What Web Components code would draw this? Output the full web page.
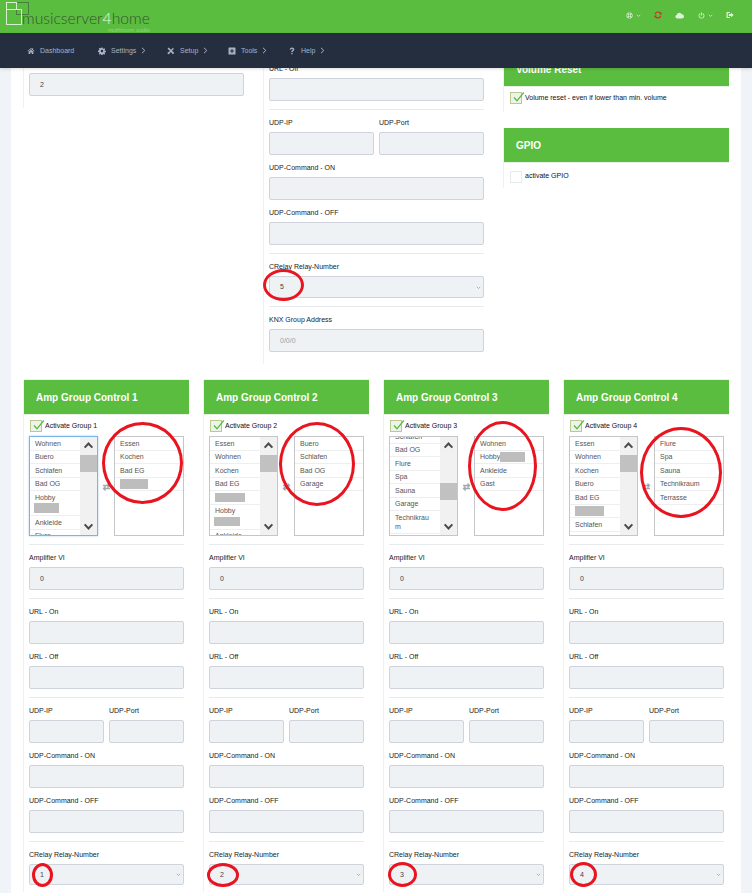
<!DOCTYPE html>
<html>
<head>
<meta charset="utf-8">
<title>musicserver4home</title>
<style>
  html, body { margin: 0; padding: 0; }
  body {
    position: relative;
    width: 752px;
    height: 893px;
    overflow: hidden;
    background: #f0f3f7;
    color: #222;
    font: 7px/10px "Liberation Sans", Arial, sans-serif;
  }
</style>
</head>
<body>
<top-bar></top-bar>
<nav-bar>
  <nav-item icon="home" label="Dashboard"></nav-item>
  <nav-item icon="gear" label="Settings" more></nav-item>
  <nav-item icon="tools" label="Setup" more></nav-item>
  <nav-item icon="plus" label="Tools" more></nav-item>
  <nav-item icon="help" label="Help" more></nav-item>
</nav-bar>
<page-main>
  <top-row>
    <side-column style="padding-top:5px;height:35px">
      <form-field value="2"></form-field>
    </side-column>
    <side-column style="margin-top:-5px;height:301px">
      <form-field label="URL - Off" line></form-field>
      <field-pair first="UDP-IP" second="UDP-Port"></field-pair>
      <form-field label="UDP-Command - ON"></form-field>
      <form-field label="UDP-Command - OFF" line></form-field>
      <form-field label="CRelay Relay-Number" select value="5" line></form-field>
      <form-field label="KNX Group Address" placeholder="0/0/0"></form-field>
    </side-column>
    <right-column>
      <panel-card title="Volume Reset" style="margin-top:-16px;height:60px">
        <check-row label="Volume reset - even if lower than min. volume" checked></check-row>
      </panel-card>
      <panel-card title="GPIO" style="margin-top:16px;height:60px">
        <check-row label="activate GPIO" style="padding-top:8px;--text-shift:-2px"></check-row>
      </panel-card>
    </right-column>
  </top-row>
  <amp-row>
    <amp-group number="1" relay="1" focused
      left="Wohnen|Buero|Schlafen|Bad OG|Hobby+#25|Ankleide|Flure" right="Essen|Kochen|Bad EG|#28"
      thumb="1:28"></amp-group>
    <amp-group number="2" relay="2"
      left="Essen|Wohnen|Kochen|Bad EG|#30|Hobby+#26|Ankleide" right="Buero|Schlafen|Bad OG|Garage"
      thumb="1:28"></amp-group>
    <amp-group number="3" relay="3" offset="7"
      left="Schlafen|Bad OG|Flure|Spa|Sauna|Garage|Technikraum" right="Wohnen|Hobby~#25|Ankleide|Gast"
      thumb="29:30"></amp-group>
    <amp-group number="4" relay="4"
      left="Essen|Wohnen|Kochen|Buero|Bad EG|#29|Schlafen" right="Flure|Spa|Sauna|Technikraum|Terrasse"
      thumb="1:33"></amp-group>
  </amp-row>
</page-main>

<red-ring x="263" y="269" w="41" h="32"></red-ring>
<red-ring x="102" y="422" w="81" h="82"></red-ring>
<red-ring x="279" y="422" w="76" h="84"></red-ring>
<red-ring x="468" y="421" w="69" h="90"></red-ring>
<red-ring x="640" y="427" w="82" h="91"></red-ring>
<red-ring x="32" y="863" w="21" h="24"></red-ring>
<red-ring x="207" y="863" w="32" h="24"></red-ring>
<red-ring x="388" y="862" w="29" h="25"></red-ring>
<red-ring x="570" y="862" w="27" h="25"></red-ring>

<script>
const icons = {
  home: `<path d="M1 8 8 2l2.400 2V2.600h1.800v3.100L15 8l-.9 1L8 4 1.900 9zM3.200 9.500 8 5.400l4.800 4.100V14H9.500v-3h-3v3H3.200z"/>`,
  gear: `<path fill-rule="evenodd" d="M6.800 1h2.400l.4 2 1.400.6 1.700-1.100 1.700 1.700-1.100 1.700.6 1.400 2 .4v2.400l-2 .4-.6 1.400 1.100 1.700-1.700 1.700-1.700-1.100-1.400.6-.4 2H6.800l-.4-2-1.400-.6-1.700 1.100-1.700-1.700 1.100-1.700-.6-1.400-2-.4V6.800l2-.4.6-1.400-1.100-1.700 1.700-1.700 1.700 1.100 1.400-.6zM8 5.600a2.400 2.400 0 1 0 0 4.800 2.400 2.400 0 0 0 0-4.800z"/>`,
  tools: `<path d="M1 3.500 3.500 1l4.500 4.500L12 1.500l.5 1.500 1.500.5-4 4 4.500 4.500-2.500 2.500L7.500 10 3.800 14.500 1.500 14l-.5-2.300L6 8z"/>`,
  plus: `<path fill-rule="evenodd" d="M2 1h12a1 1 0 0 1 1 1v12a1 1 0 0 1-1 1H2a1 1 0 0 1-1-1V2a1 1 0 0 1 1-1zm5 3v3H4v2h3v3h2V9h3V7H9V4z"/>`,
  help: `<path d="M3.500 5C3.800 2.500 5.600 1 8 1c2.600 0 4.500 1.500 4.500 3.800 0 3-3.300 3-3.300 5.200H6.600c0-3.300 3-3.400 3-5.100 0-.9-.7-1.400-1.600-1.400-1 0-1.700.6-1.900 1.800zM6.600 11.500h2.600V14.500H6.600z"/>`,
  globe: `<path fill-rule="evenodd" d="M8 1a7 7 0 1 0 0 14A7 7 0 0 0 8 1zM6.500 2.500h3L10 5H6zM5 2.800 4.600 5H2.800A5.800 5.800 0 0 1 5 2.800zM2.300 6.300h2.200v3.400H2.300zM6 6.300h4v3.400H6zM11.500 6.300h2.200v3.400h-2.200zM2.800 11h1.800L5 13.200A5.800 5.800 0 0 1 2.800 11zM6 11h4l-.5 2.500h-3zM11.400 11h1.800A5.800 5.800 0 0 1 11 13.200zM11 2.800A5.800 5.800 0 0 1 13.200 5h-1.800z"/>`,
  sync: `<path d="M8 1a7 7 0 0 1 5.500 2.700L15 2.200V7h-4.800l1.700-1.700A4.600 4.600 0 0 0 3.600 6.500H1.200A7 7 0 0 1 8 1zM1 9h4.800l-1.700 1.700a4.600 4.600 0 0 0 8.300-1.200h2.400A7 7 0 0 1 2.500 12.300L1 13.800z"/>`,
  cloud: `<path d="M4 13.500a3.500 3.500 0 0 1-.6-6.900A4.600 4.600 0 0 1 8 3a4.400 4.400 0 0 1 4.100 2.900 3.800 3.800 0 0 1 .2 7.600z"/>`,
  power: `<path d="M7 1h2v7H7zM4.600 2.600l1 1.700a4.600 4.600 0 1 0 4.800 0l1-1.700a6.600 6.600 0 1 1-6.800 0z"/>`,
  exit: `<path d="M2 2h6v2H3.500v8H8v2H2a1 1 0 0 1-1-1V3a1 1 0 0 1 1-1zM10 3.500 15.500 8 10 12.500V10H5.500V6H10z"/>`,
};

function icon(name, size, colour) {
  return `<svg width="${size}" height="${size}" viewBox="0 0 16 16" fill="${colour}">${icons[name]}</svg>`;
}

function chevron(size, colour, width) {
  return `<svg width="${size}" height="${size}" viewBox="0 0 10 10" fill="none" stroke="${colour}" stroke-width="${width}"><path d="M1.500 3.500 5 7l3.500-3.500"/></svg>`;
}

class BaseElement extends HTMLElement {
  constructor() {
    super();
    this.attachShadow({ mode: "open" });
  }
  render(styles, template) {
    this.shadowRoot.innerHTML = `<style>${styles}</style>${template}`;
  }
}

class TopBar extends BaseElement {
  connectedCallback() {
    this.render(`
      :host { display: flex; align-items: center; height: 33px; background: #5bbd40; position: relative; }
      #logo { display: flex; width: 152px; margin-left: 6px; }
      #logo svg { flex: none; margin-right: -7px; margin-top: 1px; }
      #mark { display: flex; flex-direction: column; margin-top: 8px; }
      #name { font: 300 15.700px/19px Lato, "Liberation Sans", sans-serif; color: #34552f; white-space: nowrap; }
      #name b { font-weight: 300; color: #eef8ea; }
      #sub { font: 300 6px/6px Lato, "Liberation Sans", sans-serif; color: #b8e3ac; text-align: right; margin-top: -1px; white-space: nowrap; }
      #actions { display: flex; align-items: center; margin-left: auto; margin-right: 18px; margin-top: -3px; }
      #actions span { display: flex; align-items: center; gap: 3px; }
    `, `
      <div id="logo">
        <svg width="23" height="24" viewBox="0 0 23 24" fill="none">
          <rect x="10.500" y="0.500" width="12" height="12" stroke="#3f6b3a" stroke-opacity=".75"/>
          <rect x="0.500" y="0.500" width="10" height="7" stroke="#d5eecd"/>
          <rect x="0.500" y="7.500" width="15" height="15" stroke="#d5eecd"/>
        </svg>
        <div id="mark">
          <div id="name">musicserver<b>4</b>home</div>
          <div id="sub">multiroom audio</div>
        </div>
      </div>
      <div id="actions">
        <span style="margin-right:13px">${icon("globe", 7, "#dff2d9")}${chevron(5, "#dff2d9", 1.400)}</span>
        <span style="margin-right:13px">${icon("sync", 8, "#d8261f")}</span>
        <span style="margin-right:14px">${icon("cloud", 9, "#dff2d9")}</span>
        <span style="margin-right:13px">${icon("power", 7, "#dff2d9")}${chevron(5, "#dff2d9", 1.400)}</span>
        <span>${icon("exit", 8, "#dff2d9")}</span>
      </div>
    `);
  }
}

class NavBar extends BaseElement {
  connectedCallback() {
    this.render(`
      :host { display: flex; align-items: center; height: 35px; padding-left: 27px; box-sizing: border-box; background: #252e3f; position: relative; z-index: 2; box-shadow: 0 1px 3px rgba(0,0,0,.15); }
    `, `<slot></slot>`);
  }
}

const navWidths = { Dashboard: 71, Settings: 69, Setup: 61, Tools: 60, Help: 40 };

class NavItem extends BaseElement {
  connectedCallback() {
    const label = this.getAttribute("label");
    this.render(`
      :host { display: flex; align-items: center; width: ${navWidths[label]}px; color: #a7b2c4; font-size: 7px; }
      svg { flex: none; }
      #glyph { width: 13px; display: flex; }
      #more { margin-left: 5px; display: flex; }
    `, `
      <span id="glyph">${icon(this.getAttribute("icon"), 8, "#a7b2c4")}</span>
      <span>${label}</span>
      ${this.hasAttribute("more") ? `<span id="more"><svg width="5" height="7" viewBox="0 0 5 7" fill="none" stroke="#a7b2c4"><path d="M1 .8 3.800 3.500 1 6.200"/></svg></span>` : ""}
    `);
  }
}

class PageMain extends BaseElement {
  connectedCallback() {
    this.render(`
      :host { display: block; height: 825px; margin: 0 11px; padding: 0 12px 0 13px; background: #fff; overflow: hidden; }
    `, `<slot></slot>`);
  }
}

class TopRow extends BaseElement {
  connectedCallback() {
    this.render(`
      :host { display: grid; grid-template-columns: repeat(3, 225px); column-gap: 15px; height: 296px; margin-bottom: 16px; align-items: start; }
    `, `<slot></slot>`);
  }
}

class AmpRow extends BaseElement {
  connectedCallback() {
    this.render(`
      :host { display: grid; grid-template-columns: repeat(4, 165px); column-gap: 15px; }
    `, `<slot></slot>`);
  }
}

class SideColumn extends BaseElement {
  connectedCallback() {
    this.render(`
      :host { display: block; box-sizing: content-box; padding: 0 5px; box-shadow: -1px 0 0 #eef1f4; }
    `, `<slot></slot>`);
  }
}

class RightColumn extends BaseElement {
  connectedCallback() {
    this.render(`:host { display: block; }`, `<slot></slot>`);
  }
}

class PanelCard extends BaseElement {
  connectedCallback() {
    this.render(`
      :host { display: block; box-shadow: -1px 0 0 #eef1f4; }
      #title { height: 35px; padding: 1px 0 0 12px; display: flex; align-items: center; background: #5bbd40; border-bottom: 1px solid #e8f0e5; box-sizing: border-box; color: #fff; font: bold 10px "Liberation Sans", Arial, sans-serif; }
    `, `<div id="title">${this.getAttribute("title")}</div><slot></slot>`);
  }
}

class CheckRow extends BaseElement {
  connectedCallback() {
    const tick = this.hasAttribute("checked")
      ? `<svg width="14" height="14" viewBox="0 0 14 14" fill="none" style="position:absolute;left:0;top:-2px"><path d="M3 6.500 6 9.800 12.800 1.500" stroke="#5bbd40" stroke-width="1.300"/></svg>`
      : "";
    const border = this.hasAttribute("checked") ? "#b9c98f" : "#e6e9ed";
    const fill = this.hasAttribute("checked") ? "#eef3ea" : "#fff";
    this.render(`
      :host { display: flex; align-items: center; padding: 5px 0 0 6px; color: #111; }
      #box { position: relative; width: 12px; height: 12px; box-sizing: border-box; margin-right: 3px; border: 1px solid ${border}; background: ${fill}; flex: none; }
      #text { margin-top: var(--text-shift, 0); white-space: nowrap; }
    `, `<span id="box">${tick}</span><span id="text">${this.getAttribute("label")}</span>`);
  }
}

class FormField extends BaseElement {
  connectedCallback() {
    const label = this.getAttribute("label");
    const isSelect = this.hasAttribute("select");
    const placeholder = this.getAttribute("placeholder");
    const value = placeholder || this.getAttribute("value") || "";
    this.render(`
      :host { display: block; margin-bottom: 7px; }
      #label { height: 10px; line-height: 12px; margin-bottom: 5px; color: #222; white-space: nowrap; }
      #input { display: flex; align-items: center; justify-content: space-between; box-sizing: border-box; height: ${isSelect ? (this.getAttribute("height") || 22) : 23}px; padding: 0 2px 0 10px; background: #eff2f5; border: 1px solid #cfd4dc; border-radius: 2px; color: ${placeholder ? "#9a9ea6" : "#444"}; }
      hr { border: 0; height: 1px; margin: 8px 0 0; background: #e8ebee; }
    `, `
      ${label ? `<div id="label">${label}</div>` : ""}
      <div id="input"><span>${value}</span>${isSelect ? chevron(5, "#8a919c", 1.300) : ""}</div>
      ${this.hasAttribute("line") ? "<hr>" : ""}
    `);
  }
}

class FieldPair extends BaseElement {
  connectedCallback() {
    this.render(`
      :host { display: grid; grid-template-columns: 1fr 1fr; column-gap: 5px; }
    `, `
      <form-field label="${this.getAttribute("first")}"></form-field>
      <form-field label="${this.getAttribute("second")}"></form-field>
    `);
  }
}

class GroupList extends BaseElement {
  row(item) {
    const block = (w, extra = "") => `<i style="width:${w}px;${extra}"></i>`;
    if (item.startsWith("#")) return `<li>${block(item.slice(1))}</li>`;
    if (item.includes("+")) {
      const [text, w] = item.split("+#");
      return `<li>${text}<br>${block(w, "margin:1px 0 1px -1px")}</li>`;
    }
    if (item.includes("~")) {
      const [text, w] = item.split("~#");
      return `<li>${text}${block(w, "vertical-align:top")}</li>`;
    }
    return `<li>${item}</li>`;
  }
  connectedCallback() {
    const items = this.getAttribute("items").split("|");
    const thumb = this.getAttribute("thumb");
    const offset = this.getAttribute("offset") || 0;
    const [thumbTop, thumbHeight] = thumb ? thumb.split(":") : [0, 0];
    const up = `<svg width="11" height="11" viewBox="0 0 10 10" fill="none" stroke="#4a4a4a" stroke-width="1.800" style="transform:rotate(180deg)"><path d="M1.500 3 5 6.800 8.500 3"/></svg>`;
    const down = `<svg width="11" height="11" viewBox="0 0 10 10" fill="none" stroke="#4a4a4a" stroke-width="1.800"><path d="M1.500 3 5 6.800 8.500 3"/></svg>`;
    this.render(`
      :host { display: flex; height: 100px; box-sizing: border-box; background: #fff; border: 1px solid ${this.hasAttribute("focused") ? "#7db4e6" : "#c4c6c9"}; box-shadow: ${this.hasAttribute("focused") ? "0 0 2px #a8cdf0" : "none"}; overflow: hidden; color: #555; }
      ul { flex: 1; min-width: 0; margin: -${offset}px 0 0; padding: 0; list-style: none; }
      li { padding: 1.500px 8px 1.500px 5px; line-height: 9.500px; border-bottom: 1px solid #eceef0; word-break: break-all; }
      i { display: inline-block; height: 9.500px; background: #bdbdbd; vertical-align: top; }
      #bar { flex: none; width: 17px; display: flex; flex-direction: column; background: #f1f1f1; }
      #bar div { height: 17px; flex: none; display: flex; align-items: center; justify-content: center; }
      #track { flex: 1 !important; height: auto !important; display: block !important; }
      #thumb { width: 17px; background: #c1c1c1; height: ${thumbHeight}px; margin-top: ${thumbTop}px; }
    `, `
      <ul>${items.map((item) => this.row(item)).join("")}</ul>
      ${thumb ? `<div id="bar"><div>${up}</div><div id="track"><div id="thumb"></div></div><div>${down}</div></div>` : ""}
    `);
  }
}

class AmpGroup extends BaseElement {
  connectedCallback() {
    const n = this.getAttribute("number");
    const thumb = this.getAttribute("thumb");
    const offset = this.getAttribute("offset") || 0;
    this.render(`
      :host { display: block; box-shadow: -1px 0 0 #eef1f4, 0 -1px 0 #eef1f4; }
      #title { height: 35px; padding: 1px 0 0 12px; display: flex; align-items: center; box-sizing: border-box; background: #5bbd40; border-bottom: 1px solid #e8f0e5; color: #fff; font: bold 10px "Liberation Sans", Arial, sans-serif; }
      #body { padding: 0 5px; }
      check-row { padding: 5px 0 0 1px; height: 12px; }
      #lists { display: grid; grid-template-columns: 69px 16px 70px; margin-top: 4px; }
      #swap { display: flex; align-items: center; justify-content: center; padding-top: 1px; }
      hr { border: 0; height: 1px; margin: 8px 0 7px; background: #e8ebee; }
    `, `
      <div id="title">Amp Group Control ${n}</div>
      <div id="body">
        <check-row label="Activate Group ${n}" checked></check-row>
        <div id="lists">
          <group-list items="${this.getAttribute("left")}" thumb="${thumb}" offset="${offset}" ${this.hasAttribute("focused") ? "focused" : ""}></group-list>
          <div id="swap"><svg width="9" height="8" viewBox="0 0 9 8" fill="none" stroke="#a3a7ab" stroke-width="1.300"><path d="M1 2.500h6.500M5.500.5l2 2-2 2M8 5.500H1.500M3.500 3.500l-2 2 2 2"/></svg></div>
          <group-list items="${this.getAttribute("right")}"></group-list>
        </div>
        <hr>
        <form-field label="Amplifier VI" value="0" line></form-field>
        <form-field label="URL - On"></form-field>
        <form-field label="URL - Off" line></form-field>
        <field-pair first="UDP-IP" second="UDP-Port"></field-pair>
        <form-field label="UDP-Command - ON"></form-field>
        <form-field label="UDP-Command - OFF" line></form-field>
        <form-field label="CRelay Relay-Number" select height="21" value="${this.getAttribute("relay")}"></form-field>
      </div>
    `);
  }
}

class RedRing extends BaseElement {
  connectedCallback() {
    const [x, y, w, h] = ["x", "y", "w", "h"].map((k) => this.getAttribute(k));
    this.render(`
      :host { position: absolute; left: ${x}px; top: ${y}px; width: ${w}px; height: ${h}px; box-sizing: border-box; border: 3px solid #e8141f; border-radius: 50%; z-index: 3; }
    `, ``);
  }
}

customElements.define("top-bar", TopBar);
customElements.define("nav-bar", NavBar);
customElements.define("nav-item", NavItem);
customElements.define("page-main", PageMain);
customElements.define("top-row", TopRow);
customElements.define("amp-row", AmpRow);
customElements.define("side-column", SideColumn);
customElements.define("right-column", RightColumn);
customElements.define("panel-card", PanelCard);
customElements.define("check-row", CheckRow);
customElements.define("form-field", FormField);
customElements.define("field-pair", FieldPair);
customElements.define("group-list", GroupList);
customElements.define("amp-group", AmpGroup);
customElements.define("red-ring", RedRing);
</script>
</body>
</html>
